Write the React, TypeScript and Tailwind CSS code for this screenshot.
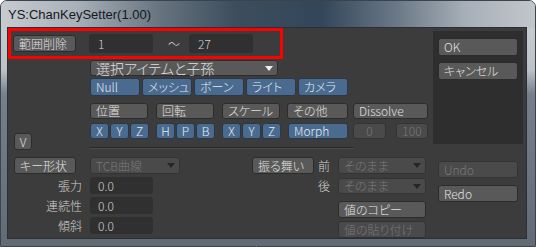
import type { ReactNode } from 'react'

type Tone = 'gray' | 'blue' | 'off'

const tones: Record<Tone, string> = {
  gray: 'bg-[#595959] text-[#e0e0e0] border-[#2c2c2c]',
  blue: 'bg-[#4a6b8f] text-[#e4ebf3] border-[#2a3848]',
  off: 'bg-[#4a4a4a] text-[#787878] border-[#333333]',
}

function Btn({
  children,
  className = '',
  tone = 'gray',
  center = false,
}: {
  children: ReactNode
  className?: string
  tone?: Tone
  center?: boolean
}) {
  return (
    <div
      className={`flex shrink-0 items-center overflow-hidden rounded-[3px] border text-[12px] leading-none whitespace-nowrap ${
        center ? 'justify-center' : 'pl-[5px]'
      } ${tones[tone]} ${className}`}
    >
      {children}
    </div>
  )
}

function Select({
  children,
  className = '',
  off = false,
}: {
  children: ReactNode
  className?: string
  off?: boolean
}) {
  return (
    <div
      className={`flex shrink-0 items-center justify-between rounded-[3px] border pl-[5px] pr-[4px] leading-none whitespace-nowrap ${
        off ? tones.off : tones.gray
      } ${className}`}
    >
      <span>{children}</span>
      <span
        className={`h-0 w-0 border-x-[4px] border-t-[5px] border-x-transparent ${
          off ? 'border-t-[#262626]' : 'border-t-[#f0f0f0]'
        }`}
      />
    </div>
  )
}

function Field({ children, className = '' }: { children: ReactNode; className?: string }) {
  return (
    <div
      className={`flex shrink-0 items-center rounded-[3px] bg-[#303030] pl-[8px] text-[12px] leading-none text-[#d2d2d2] ${className}`}
    >
      {children}
    </div>
  )
}

export default function App() {
  return (
    <div className="h-[247px] w-[536px] overflow-hidden bg-white">
      <div className="flex h-[247px] w-[536px] flex-col rounded-t-[7px] border border-[#3b434c] bg-[linear-gradient(to_bottom,#cdd1d5_0%,#bcc2c8_28%,#76808b_38%,#616b76_100%)]">
        {/* title bar */}
        <div className="flex h-[27px] items-center rounded-t-[6px] bg-[linear-gradient(to_right,#c6cbd0_0%,#a9b1b9_14%,#66737f_30%,#3d4d5c_44%,#33465a_60%,#6a7886_74%,#a7afb8_87%,#c1c6cb_100%)] pl-[7px] font-['Liberation_Sans',sans-serif] text-[13px] text-[#16191c]">
          YS:ChanKeySetter(1.00)
        </div>

        <div className="flex pl-[7px]">
          {/* client */}
          <div className="relative flex h-[210px] w-[518px] bg-[#3c3c3c] font-['Noto_Sans_CJK_JP',sans-serif] font-light [font-feature-settings:'palt'] shadow-[0_0_0_1px_#2b3036]">
            <div className="flex w-[425px] flex-col">
              {/* range row */}
              <div className="flex h-[31px] items-center">
                <Btn className="ml-[5px] h-[17px] w-[63px]">範囲削除</Btn>
                <Field className="ml-[13px] h-[19px] w-[64px] pl-[9px] text-[#cdd6ee]">1</Field>
                <span className="ml-[15px] w-[12px] text-[12px] leading-none text-[#d8d8d8]">〜</span>
                <Field className="ml-[9px] h-[19px] w-[64px] pl-[9px] text-[#cdd6ee]">27</Field>
              </div>

              {/* item selection */}
              <div className="flex">
                <div className="w-[82px] pt-[74px]">
                  <Btn center className="ml-[6px] h-[17px] w-[18px]">
                    V
                  </Btn>
                </div>
                <div className="flex flex-col">
                  <Select className="mt-[1px] h-[16px] w-[188px] text-[14px]">選択アイテムと子孫</Select>
                  <div className="mt-[2px] flex gap-[2px]">
                    {['Null', 'メッシュ', 'ボーン', 'ライト', 'カメラ'].map((t) => (
                      <Btn key={t} tone="blue" className="h-[18px] w-[50px]">
                        {t}
                      </Btn>
                    ))}
                  </div>
                  <div className="mt-[7px] flex h-[16px]">
                    <Btn className="h-[16px] w-[58px]">位置</Btn>
                    <Btn className="ml-[8px] h-[16px] w-[58px]">回転</Btn>
                    <Btn className="ml-[8px] h-[16px] w-[58px]">スケール</Btn>
                    <Btn className="ml-[7px] h-[16px] w-[61px]">その他</Btn>
                    <Btn className="ml-[5px] h-[16px] w-[75px]">Dissolve</Btn>
                  </div>
                  <div className="mt-[4px] flex h-[16px]">
                    {['X', 'Y', 'Z'].map((t, i) => (
                      <Btn key={'a' + t} tone="blue" center className={`h-[16px] w-[19px] ${i ? 'ml-[1px]' : ''}`}>
                        {t}
                      </Btn>
                    ))}
                    {['H', 'P', 'B'].map((t, i) => (
                      <Btn key={t} tone="blue" center className={`h-[16px] w-[19px] ${i ? 'ml-[1px]' : 'ml-[7px]'}`}>
                        {t}
                      </Btn>
                    ))}
                    {['X', 'Y', 'Z'].map((t, i) => (
                      <Btn key={'s' + t} tone="blue" center className={`h-[16px] w-[19px] ${i ? 'ml-[1px]' : 'ml-[7px]'}`}>
                        {t}
                      </Btn>
                    ))}
                    <Btn tone="blue" className="ml-[7px] h-[16px] w-[60px]">
                      Morph
                    </Btn>
                    <Btn tone="off" center className="ml-[5px] h-[16px] w-[33px] text-[#8a8a8a]">
                      0
                    </Btn>
                    <Btn tone="off" center className="ml-[10px] h-[16px] w-[32px] text-[#8a8a8a]">
                      100
                    </Btn>
                  </div>
                  <div className="mt-[8px] h-[2px] w-[263px] border-t border-b border-t-[#272727] border-b-[#4c4c4c]" />
                </div>
              </div>

              {/* key shape + behaviour */}
              <div className="flex pt-[7px]">
                <div className="flex w-[244px] flex-col">
                  <div className="flex h-[17px] items-center">
                    <Btn className="ml-[6px] h-[17px] w-[62px]">キー形状</Btn>
                    <Select off className="ml-[14px] h-[17px] w-[90px] text-[12px]">
                      TCB曲線
                    </Select>
                  </div>
                  {['張力', '連続性', '傾斜'].map((l) => (
                    <div key={l} className="mt-[3px] flex h-[17px] items-center">
                      <span className="w-[74px] text-right text-[12px] leading-none text-[#d0d0d0]">{l}</span>
                      <Field className="ml-[8px] h-[17px] w-[63px]">0.0</Field>
                    </div>
                  ))}
                </div>
                <div className="flex flex-col">
                  <div className="flex h-[17px] items-center">
                    <Btn className="h-[17px] w-[62px]">振る舞い</Btn>
                    <span className="w-[24px] pr-[8px] text-right text-[12px] leading-none text-[#d0d0d0]">前</span>
                    <Select off className="h-[17px] w-[88px] text-[12px]">
                      そのまま
                    </Select>
                  </div>
                  <div className="mt-[4px] flex h-[16px] items-center">
                    <span className="w-[86px] pr-[8px] text-right text-[12px] leading-none text-[#d0d0d0]">後</span>
                    <Select off className="h-[16px] w-[88px] text-[12px]">
                      そのまま
                    </Select>
                  </div>
                  <Btn className="ml-[86px] mt-[7px] h-[17px] w-[88px]">値のコピー</Btn>
                  <Btn tone="off" className="ml-[86px] mt-[3px] h-[17px] w-[88px]">
                    値の貼り付け
                  </Btn>
                </div>
              </div>
            </div>

            {/* right column */}
            <div className="flex w-[90px] flex-col pt-[3px]">
              <div className="flex h-[113px] flex-col bg-[#2e2e2e] px-[5px] pt-[7px]">
                <Btn className="h-[18px] w-[80px]">OK</Btn>
                <Btn className="mt-[6px] h-[18px] w-[80px]">キャンセル</Btn>
              </div>
              <Btn tone="off" className="ml-[5px] mt-[17px] h-[17px] w-[80px]">
                Undo
              </Btn>
              <Btn className="ml-[5px] mt-[7px] h-[17px] w-[80px]">Redo</Btn>
            </div>

            {/* highlight annotation */}
            <div className="pointer-events-none absolute left-0 top-0 h-[31px] w-[275px] border-[3px] border-[#ff0000]" />
          </div>
        </div>
      </div>
    </div>
  )
}
